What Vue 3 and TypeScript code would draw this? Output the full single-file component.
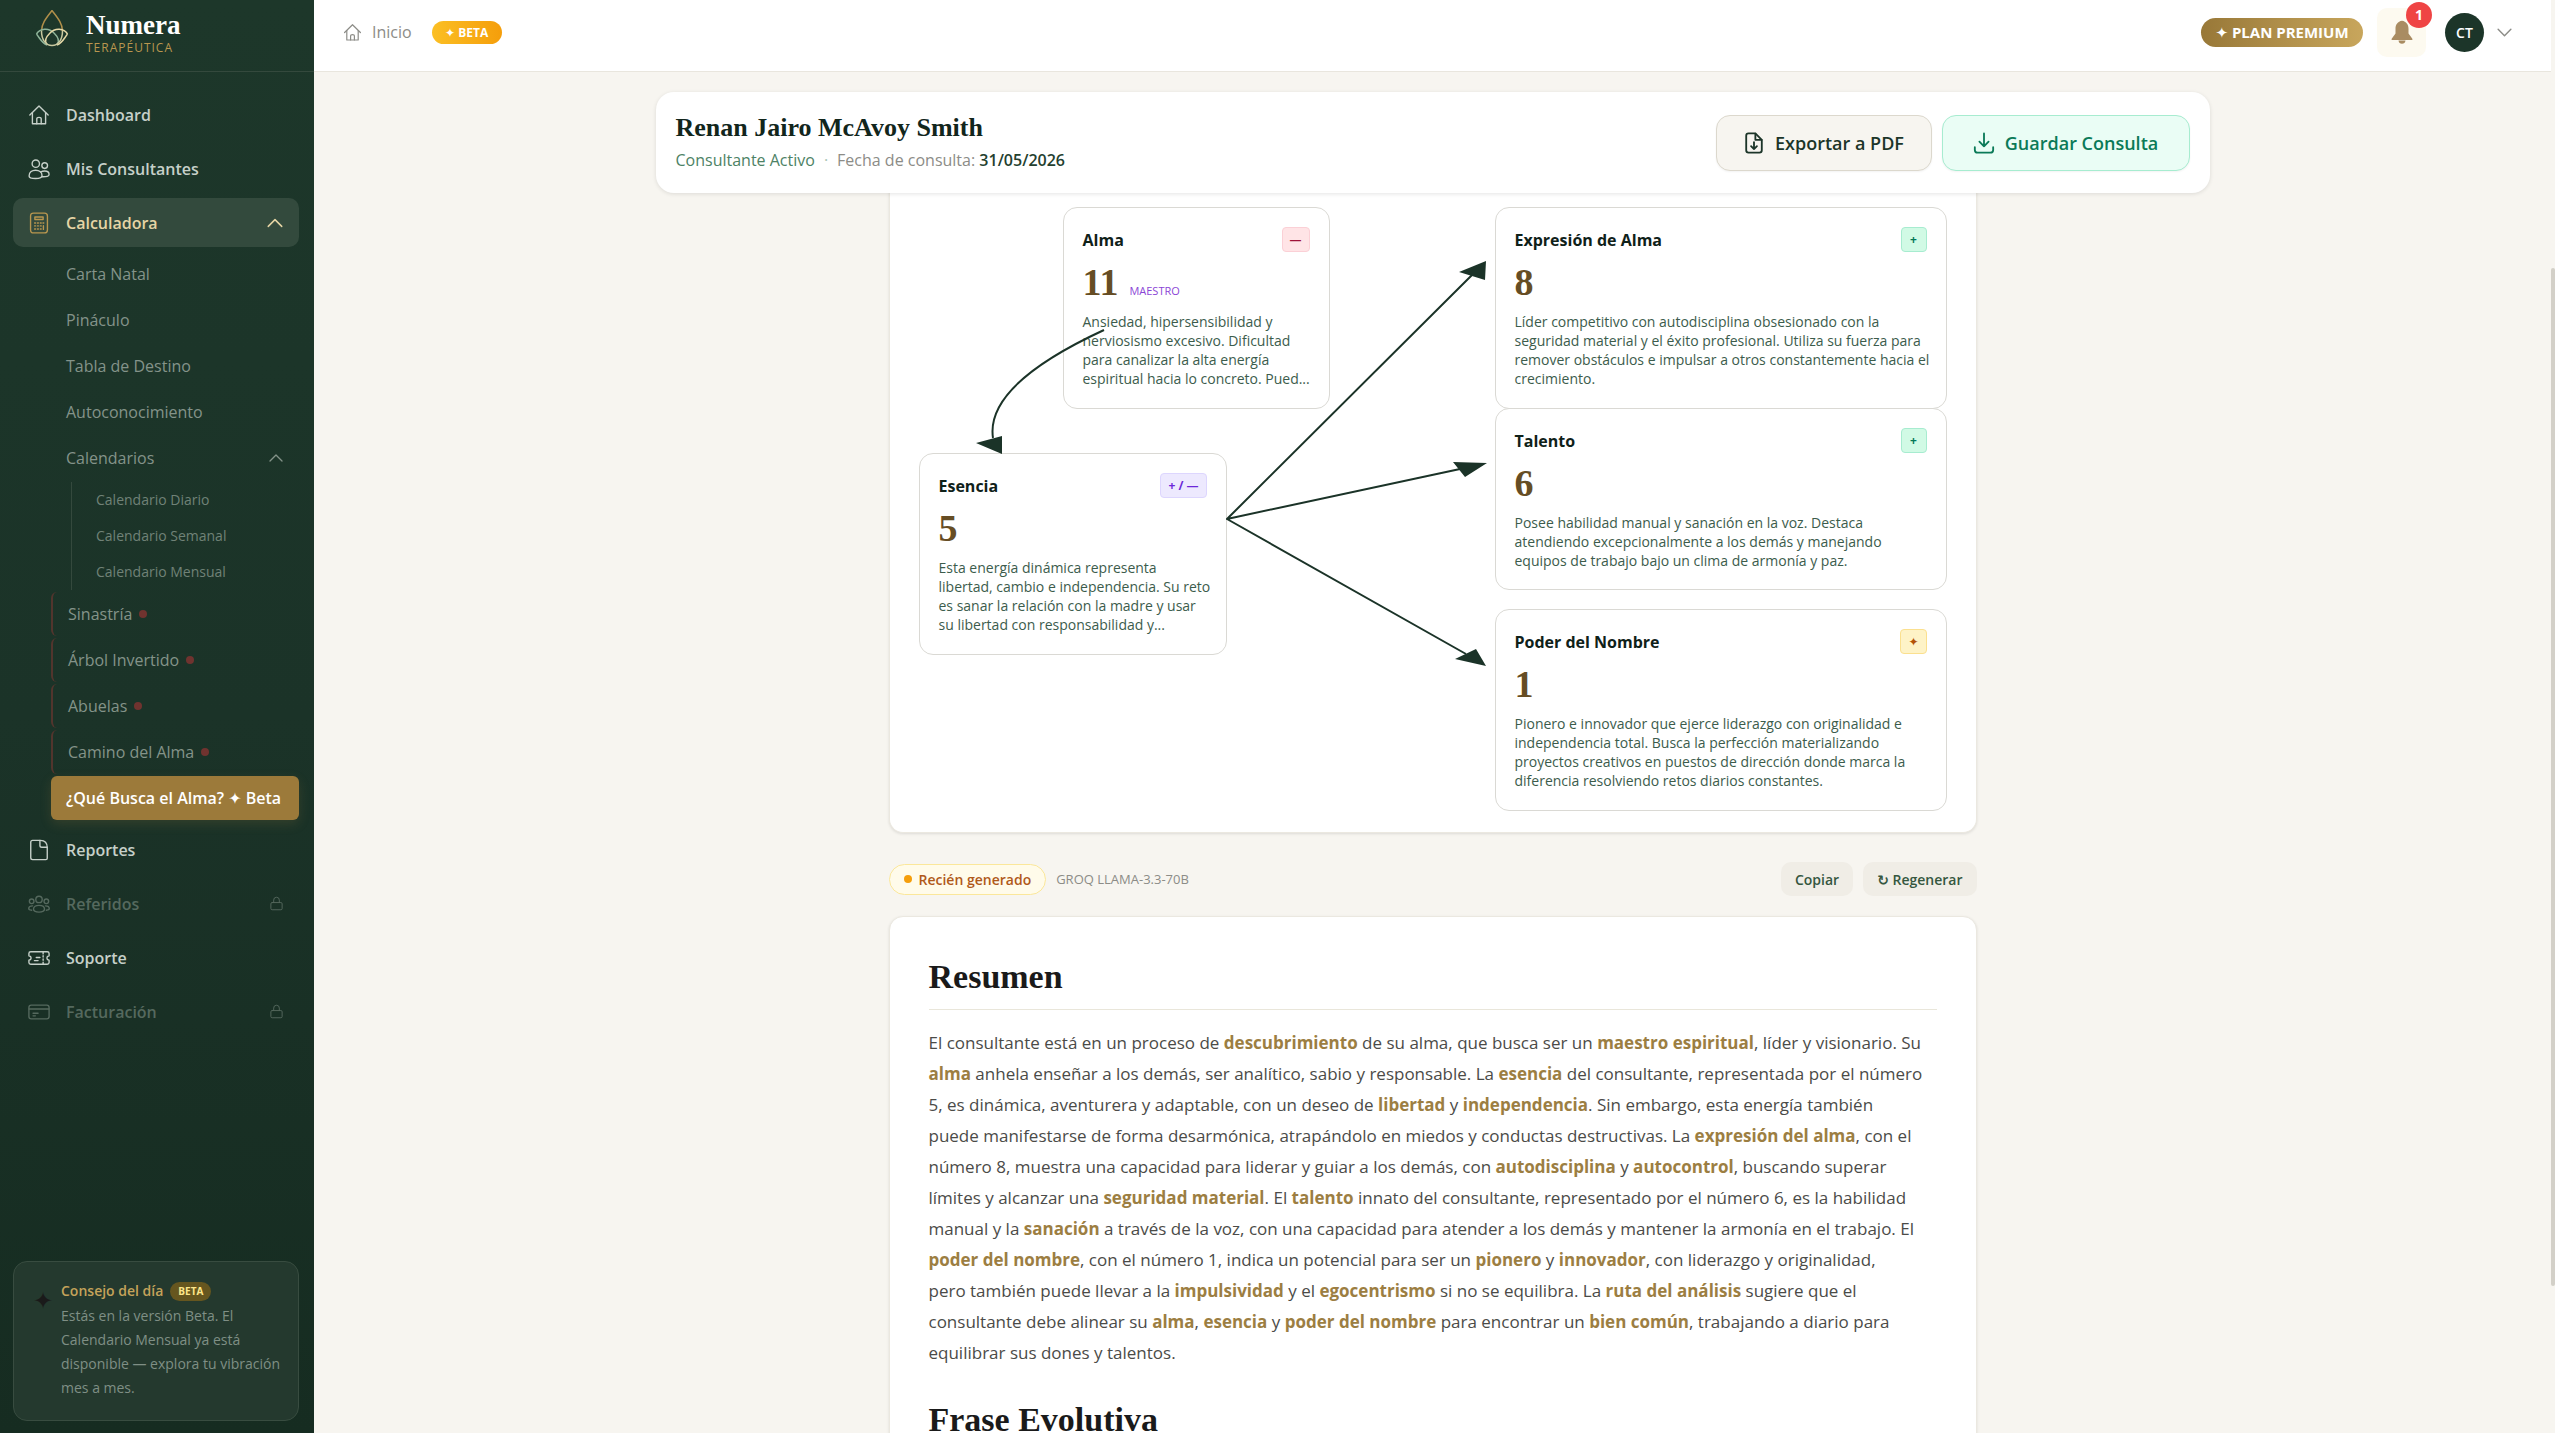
<script setup lang="ts">
type IconName = 'home' | 'users' | 'calc' | 'doc' | 'group' | 'ticket' | 'card' | 'lock' | 'up' | 'down' | 'pdf' | 'save'

const icons: Record<IconName, string[]> = {
  home: ['M2 12 12 2.2 22 12', 'M4.8 9.5V21.5H19.2V9.5', 'M9.6 21.5V16.2Q9.6 14.6 12 14.6T14.4 16.2V21.5'],
  users: [
    'M8.5 2.2a4 4 0 1 1 0 8 4 4 0 0 1 0-8Z',
    'M18.2 5.2a3 3 0 1 1 0 6.200 3 3 0 0 1 0-6.200Z',
    'M1.200 19.500C1.200 15.500 4.500 13.300 8.300 13.300S15.300 15.500 15.300 19C15.300 21.500 12 22.300 8.300 22.300S1.200 21.800 1.200 19.500Z',
    'M14 15.200C15.200 14.500 16.600 14.200 18.200 14.200 21 14.200 23 15.800 23 18 23 19.800 20.500 20.600 15.200 20.400',
  ],
  calc: [
    'M6 1.200H18Q21.200 1.200 21.200 4.400V19.600Q21.200 22.800 18 22.800H6Q2.800 22.800 2.800 19.600V4.400Q2.800 1.200 6 1.200Z',
    'M7.500 5.500H16.500V8.200H7.500Z',
    'M7.200 12H8.200M10.300 12H11.300M13.400 12H14.400M16.300 12H17.200M7.200 15.200H8.200M10.300 15.200H11.300M13.400 15.200H14.400M7.200 18.600H8.200M10.300 18.600H11.300M13.400 18.600H14.400M16.800 15V19',
  ],
  doc: ['M5 1.500H13.500Q21 1.500 21 9.500V21Q21 22.500 19.500 22.500H5Q3 22.500 3 20.500V3.500Q3 1.500 5 1.500Z', 'M13 1.700V7Q13 9 15 9H21'],
  group: [
    'M12 3.500a3.500 3.500 0 1 1 0 7 3.500 3.500 0 0 1 0-7Z',
    'M4 6.600a2.500 2.500 0 1 1 0 5 2.500 2.500 0 0 1 0-5ZM20 6.600a2.500 2.500 0 1 1 0 5 2.500 2.500 0 0 1 0-5Z',
    'M6 17.500C6 14.800 8.500 13.500 12 13.500S18 14.800 18 17.500 15.500 20.800 12 20.800 6 20.300 6 17.500Z',
    'M5 14C2.500 14 .8 15 .8 17 .8 18 2 18.700 4 18.800M19 14C21.500 14 23.200 15 23.200 17 23.200 18 22 18.700 20 18.800',
  ],
  ticket: [
    'M3 5.200H21Q23 5.200 23 7V9.500Q20.600 10 20.600 12T23 14.500V17Q23 18.800 21 18.800H3Q1 18.800 1 17V14.500Q3.400 14 3.400 12T1 9.500V7Q1 5.200 3 5.200Z',
    'M16.500 5.500V7.500M16.500 9.500V11M16.500 13V14.500M16.500 16.500V18.500',
    'M9 11.500H13M7 14.800H11',
  ],
  card: ['M3.500 4.500H20.500Q23 4.500 23 7V17Q23 19.500 20.500 19.500H3.500Q1 19.500 1 17V7Q1 4.500 3.500 4.500Z', 'M1.200 8.700H22.800', 'M5.500 13.300H11M5.500 16.200H8'],
  lock: ['M5 10.500H19Q21 10.500 21 12.500V20Q21 22 19 22H5Q3 22 3 20V12.500Q3 10.500 5 10.500Z', 'M7.500 10.200V6.500a4.500 4.500 0 0 1 9 0V10.200'],
  up: ['M3 16.500 12 7.500 21 16.500'],
  down: ['M3 7.500 12 16.500 21 7.500'],
  pdf: ['M6 1.500H13.500L20.500 8.500V20Q20.500 22.500 18 22.500H6Q3.500 22.500 3.500 20V4Q3.500 1.500 6 1.500Z', 'M13.500 1.700V8.500H20.300', 'M12 11V18.500M8.800 15.500 12 18.700 15.200 15.500'],
  save: ['M12 1.500V15.500M7 10.500 12 15.700 17 10.500', 'M2 16.500V19.500Q2 22.500 5 22.500H19Q22 22.500 22 19.500V16.500'],
}

interface NavItem { label: string; icon: IconName; locked?: boolean }

const mainNav: NavItem[] = [
  { label: 'Dashboard', icon: 'home' },
  { label: 'Mis Consultantes', icon: 'users' },
]
const tools = ['Carta Natal', 'Pináculo', 'Tabla de Destino', 'Autoconocimiento']
const calendars = ['Calendario Diario', 'Calendario Semanal', 'Calendario Mensual']
const restricted = ['Sinastría', 'Árbol Invertido', 'Abuelas', 'Camino del Alma']
const lowerNav: NavItem[] = [
  { label: 'Reportes', icon: 'doc' },
  { label: 'Referidos', icon: 'group', locked: true },
  { label: 'Soporte', icon: 'ticket' },
  { label: 'Facturación', icon: 'card', locked: true },
]

interface DiagramNode {
  title: string; value: string; tag?: string; badge: string; tone: string
  lines: string[]; x: number; y: number; w: number; h: number
}

const nodes: DiagramNode[] = [
  {
    title: 'Alma', value: '11', tag: 'MAESTRO', badge: '—', tone: 'rose', x: 173, y: 30, w: 267, h: 202,
    lines: ['Ansiedad, hipersensibilidad y', 'nerviosismo excesivo. Dificultad', 'para canalizar la alta energía', 'espiritual hacia lo concreto. Pued...'],
  },
  {
    title: 'Esencia', value: '5', badge: '+ / —', tone: 'violet', x: 29, y: 276, w: 308, h: 202,
    lines: ['Esta energía dinámica representa', 'libertad, cambio e independencia. Su reto', 'es sanar la relación con la madre y usar', 'su libertad con responsabilidad y...'],
  },
  {
    title: 'Expresión de Alma', value: '8', badge: '+', tone: 'green', x: 605, y: 30, w: 452, h: 202,
    lines: ['Líder competitivo con autodisciplina obsesionado con la', 'seguridad material y el éxito profesional. Utiliza su fuerza para', 'remover obstáculos e impulsar a otros constantemente hacia el', 'crecimiento.'],
  },
  {
    title: 'Talento', value: '6', badge: '+', tone: 'green', x: 605, y: 231, w: 452, h: 182,
    lines: ['Posee habilidad manual y sanación en la voz. Destaca', 'atendiendo excepcionalmente a los demás y manejando', 'equipos de trabajo bajo un clima de armonía y paz.'],
  },
  {
    title: 'Poder del Nombre', value: '1', badge: '✦', tone: 'amber', x: 605, y: 432, w: 452, h: 202,
    lines: ['Pionero e innovador que ejerce liderazgo con originalidad e', 'independencia total. Busca la perfección materializando', 'proyectos creativos en puestos de dirección donde marca la', 'diferencia resolviendo retos diarios constantes.'],
  },
]

/* Words between asterisks are highlighted in the rendered summary. */
const summary = [
  'El consultante está en un proceso de *descubrimiento* de su alma, que busca ser un *maestro espiritual*, líder y visionario. Su',
  '*alma* anhela enseñar a los demás, ser analítico, sabio y responsable. La *esencia* del consultante, representada por el número',
  '5, es dinámica, aventurera y adaptable, con un deseo de *libertad* y *independencia*. Sin embargo, esta energía también',
  'puede manifestarse de forma desarmónica, atrapándolo en miedos y conductas destructivas. La *expresión del alma*, con el',
  'número 8, muestra una capacidad para liderar y guiar a los demás, con *autodisciplina* y *autocontrol*, buscando superar',
  'límites y alcanzar una *seguridad material*. El *talento* innato del consultante, representado por el número 6, es la habilidad',
  'manual y la *sanación* a través de la voz, con una capacidad para atender a los demás y mantener la armonía en el trabajo. El',
  '*poder del nombre*, con el número 1, indica un potencial para ser un *pionero* y *innovador*, con liderazgo y originalidad,',
  'pero también puede llevar a la *impulsividad* y el *egocentrismo* si no se equilibra. La *ruta del análisis* sugiere que el',
  'consultante debe alinear su *alma*, *esencia* y *poder del nombre* para encontrar un *bien común*, trabajando a diario para',
  'equilibrar sus dones y talentos.',
].map((line) => line.split('*'))
</script>

<template>
  <div class="app">
    <aside class="sidebar">
      <div class="brand">
        <svg class="logo" viewBox="0 0 34 38" fill="none" stroke-width="1.500">
          <path d="M17 1.500C12 8 6.500 14 6.500 22M17 1.500C22 8 27.500 14 27.500 22" stroke="#b08f4a" />
          <path d="M1.500 25C5 19 14 18.500 19 24 23 28 25 32 22 35M1.500 25C6 31 7 34 12 36" stroke="#8fb59a" />
          <path d="M32.500 25C29 19 20 18.500 15 24 11 28 9 32 12 35M32.500 25C28 31 27 34 22 36" stroke="#e5d9a8" />
          <path d="M6.500 22C6.500 31 11 36.500 17 36.500S27.500 31 27.500 22" stroke="#c9c9a0" />
        </svg>
        <div>
          <div class="brand-name">Numera</div>
          <div class="brand-sub">TERAPÉUTICA</div>
        </div>
      </div>

      <nav class="nav">
        <a v-for="item in mainNav" :key="item.label" class="item" href="#">
          <svg class="icon" viewBox="0 0 24 24"><path v-for="d in icons[item.icon]" :key="d" :d="d" /></svg>
          <span>{{ item.label }}</span>
        </a>
        <button class="item open" type="button">
          <svg class="icon gold" viewBox="0 0 24 24"><path v-for="d in icons.calc" :key="d" :d="d" /></svg>
          <span>Calculadora</span>
          <svg class="chev" viewBox="0 0 24 24"><path :d="icons.up[0]" /></svg>
        </button>

        <div class="sub">
          <a v-for="t in tools" :key="t" class="sub-item" href="#">{{ t }}</a>
          <button class="sub-item" type="button">
            <span>Calendarios</span>
            <svg class="chev small" viewBox="0 0 24 24"><path :d="icons.up[0]" /></svg>
          </button>
          <div class="calendars">
            <a v-for="c in calendars" :key="c" href="#">{{ c }}</a>
          </div>
          <a v-for="r in restricted" :key="r" class="sub-item restricted" href="#">{{ r }}<i class="dot" /></a>
          <a class="sub-item current" href="#">¿Qué Busca el Alma? ✦ Beta</a>
        </div>

        <a v-for="item in lowerNav" :key="item.label" class="item" :class="{ locked: item.locked }" href="#">
          <svg class="icon" viewBox="0 0 24 24"><path v-for="d in icons[item.icon]" :key="d" :d="d" /></svg>
          <span>{{ item.label }}</span>
          <svg v-if="item.locked" class="lock" viewBox="0 0 24 24"><path v-for="d in icons.lock" :key="d" :d="d" /></svg>
        </a>
      </nav>

      <section class="tip">
        <span class="tip-star">✦</span>
        <div>
          <div class="tip-head">Consejo del día <span class="tip-beta">BETA</span></div>
          <p>Estás en la versión Beta. El<br>Calendario Mensual ya está<br>disponible — explora tu vibración<br>mes a mes.</p>
        </div>
      </section>
    </aside>

    <div class="content">
      <header class="topbar">
        <a class="crumb" href="#">
          <svg class="crumb-icon" viewBox="0 0 24 24"><path v-for="d in icons.home" :key="d" :d="d" /></svg>
          Inicio
        </a>
        <span class="beta">✦ BETA</span>
        <span class="plan">✦ PLAN PREMIUM</span>
        <button class="bell" type="button" aria-label="Notificaciones">
          <svg viewBox="0 0 24 24">
            <path d="M12 .8C7.800 1.500 5.500 4.500 5.500 9V13.500L1.500 19Q1.200 20 2.300 20H21.700Q22.800 20 22.500 19L18.500 13.500V9C18.500 4.500 16.200 1.500 12 .8ZM8.500 20.500Q9 23.800 12 23.800T15.500 20.500Z" />
          </svg>
          <span class="count">1</span>
        </button>
        <button class="account" type="button">
          <span class="avatar">CT</span>
          <svg class="account-chev" viewBox="0 0 24 24"><path :d="icons.down[0]" /></svg>
        </button>
      </header>

      <main class="main">
        <section class="client">
          <div>
            <h1>Renan Jairo McAvoy Smith</h1>
            <div class="meta">
              <span class="active">Consultante Activo</span>
              <span class="sep">·</span>
              <span>Fecha de consulta: <b>31/05/2026</b></span>
            </div>
          </div>
          <div class="actions">
            <button class="btn" type="button">
              <svg viewBox="0 0 24 24"><path v-for="d in icons.pdf" :key="d" :d="d" /></svg>
              Exportar a PDF
            </button>
            <button class="btn save" type="button">
              <svg viewBox="0 0 24 24"><path v-for="d in icons.save" :key="d" :d="d" /></svg>
              Guardar Consulta
            </button>
          </div>
        </section>

        <section class="diagram">
          <article
            v-for="n in nodes" :key="n.title" class="node"
            :style="{ left: n.x + 'px', top: n.y + 'px', width: n.w + 'px', height: n.h + 'px' }"
          >
            <div class="node-head">
              <h3>{{ n.title }}</h3>
              <span class="badge" :class="n.tone">{{ n.badge }}</span>
            </div>
            <div class="node-value">{{ n.value }}<small v-if="n.tag">{{ n.tag }}</small></div>
            <p><template v-for="(l, i) in n.lines" :key="l"><br v-if="i">{{ l }}</template></p>
          </article>
          <svg class="links" viewBox="0 0 1086 654" width="1086" height="654">
            <path d="M214 153Q95 208 103 261M582 98 337 342 570 292M337 342 576 477" fill="none" stroke="#1b3328" stroke-width="2" stroke-linejoin="round" />
            <path d="M86 266 112 259V277ZM569 95 596 84 595 103ZM563 285 597 286 575 300ZM565 482 586 472 596 489Z" fill="#1b3328" />
          </svg>
        </section>

        <div class="status">
          <span class="fresh"><i />Recién generado</span>
          <span class="model">GROQ LLAMA-3.3-70B</span>
          <button class="mini first" type="button">Copiar</button>
          <button class="mini" type="button">↻ Regenerar</button>
        </div>

        <article class="result">
          <h2>Resumen</h2>
          <p><template v-for="(parts, i) in summary" :key="i"><br v-if="i"><template v-for="(part, j) in parts" :key="j"><strong v-if="j % 2">{{ part }}</strong><template v-else>{{ part }}</template></template></template></p>
          <h2>Frase Evolutiva</h2>
        </article>
      </main>
    </div>
    <div class="scroll"><i /></div>
  </div>
</template>

<style>
body {
  margin: 0;
  overflow: hidden;
}
</style>

<style scoped>
* {
  box-sizing: border-box;
}
.app {
  display: flex;
  height: 100vh;
  overflow: hidden;
  background: #f7f5f0;
  color: #1a1a1a;
  font-family: "Open Sans", "Noto Sans", "DejaVu Sans", sans-serif;
  font-size: 16px;
}
a {
  color: inherit;
  text-decoration: none;
}
button {
  border: 0;
  background: none;
  color: inherit;
  font: inherit;
  padding: 0;
  text-align: left;
}
svg {
  display: block;
  flex: none;
}
.icon, .chev, .lock, .crumb-icon, .account-chev, .btn svg {
  fill: none;
  stroke: currentColor;
  stroke-width: 1.5;
  stroke-linecap: round;
  stroke-linejoin: round;
}

/* Sidebar */
.sidebar {
  display: flex;
  flex-direction: column;
  flex: none;
  width: 314px;
  background: linear-gradient(#1d372a, #1b3328 50%, #162c21);
  color: #c6d0c9;
}
.brand {
  display: flex;
  gap: 17px;
  height: 72px;
  padding: 9px 35px 0;
  border-bottom: 1px solid #34493d;
}
.logo {
  width: 34px;
  height: 38px;
}
.brand-name {
  color: #fff;
  font: bold 27px/32px "Liberation Serif", serif;
}
.brand-sub {
  color: #b9964f;
  font-size: 12px;
  line-height: 14px;
  letter-spacing: 1px;
}
.nav {
  display: flex;
  flex-direction: column;
  gap: 5px;
  padding: 18px 15px 0 13px;
}
.item {
  display: flex;
  align-items: center;
  gap: 16px;
  height: 49px;
  padding: 0 15px;
  border-radius: 10px;
  font-weight: 600;
}
.icon {
  width: 22px;
  height: 22px;
}
.gold {
  color: #b9964f;
}
.open {
  background: #334a3d;
  color: #e6d5a5;
}
.chev {
  width: 18px;
  height: 18px;
  margin-left: auto;
  stroke-width: 2;
}
.chev.small {
  width: 16px;
  height: 16px;
}
.lock {
  width: 15px;
  height: 15px;
  margin-left: auto;
}
.locked {
  color: #55695e;
}
.sub {
  display: flex;
  flex-direction: column;
  gap: 2px;
  margin-left: 38px;
  color: #849389;
}
.sub-item {
  display: flex;
  align-items: center;
  height: 44px;
  padding: 0 15px;
  border-radius: 6px;
}
.calendars {
  display: flex;
  flex-direction: column;
  margin-left: 20px;
  padding-left: 24px;
  border-left: 1px solid #34493d;
  color: #708277;
  font-size: 14px;
}
.calendars a {
  height: 36px;
  line-height: 35px;
}
.restricted {
  border-left: 2px solid #52352d;
}
.dot {
  width: 8px;
  height: 8px;
  margin-left: 7px;
  border-radius: 4px;
  background: #70332f;
}
.current {
  background: #9c7a3a;
  color: #fff;
  font-weight: 600;
  white-space: nowrap;
  box-shadow: 0 4px 12px #9c7a3a33;
}
.tip {
  display: flex;
  gap: 9px;
  height: 160px;
  margin: auto 15px 12px 13px;
  padding: 17px 16px;
  border: 1px solid #384c40;
  border-radius: 14px;
  background: #24392e;
}
.tip-star {
  width: 22px;
  padding-left: 3px;
  color: #1a1a1a;
  font-size: 24px;
  line-height: 42px;
}
.tip-head {
  display: flex;
  align-items: center;
  gap: 7px;
  color: #c4a35a;
  font-size: 14px;
  line-height: 24px;
  font-weight: 600;
  white-space: nowrap;
}
.tip-beta {
  padding: 0 8px;
  border-radius: 10px;
  background: #66561f;
  color: #fde68a;
  font-size: 10px;
  line-height: 19px;
  font-weight: 700;
}
.tip p {
  margin: 1px 0 0;
  color: #7f8f85;
  font-size: 14px;
  line-height: 24px;
  white-space: nowrap;
}

/* Top bar */
.content {
  display: flex;
  flex: 1;
  flex-direction: column;
  min-width: 0;
}
.topbar {
  display: flex;
  flex: none;
  align-items: center;
  height: 72px;
  padding: 0 38px 7px 29px;
  border-bottom: 1px solid #e9e6de;
  background: #fff;
}
.crumb {
  display: flex;
  align-items: center;
  gap: 10px;
  color: #8c8c87;
}
.crumb-icon {
  width: 19px;
  height: 19px;
}
.beta, .plan {
  border-radius: 15px;
  color: #fff;
  font-weight: 700;
  text-align: center;
  white-space: nowrap;
}
.beta {
  width: 70px;
  margin-left: 20px;
  background: linear-gradient(90deg, #fbbf24, #f59e0b);
  font-size: 12px;
  line-height: 23px;
}
.plan {
  width: 162px;
  margin: 0 14px 0 auto;
  background: linear-gradient(90deg, #987838, #c8a65c);
  font-size: 15px;
  line-height: 29px;
}
.bell {
  position: relative;
  display: grid;
  place-items: center;
  width: 49px;
  height: 49px;
  border-radius: 10px;
  background: #fdfaf0;
}
.bell svg {
  width: 24px;
  height: 24px;
  fill: #a98c62;
}
.count {
  position: absolute;
  top: -6px;
  right: -6px;
  width: 26px;
  border-radius: 13px;
  background: #ef4444;
  color: #fff;
  font-size: 14px;
  font-weight: 700;
  line-height: 26px;
  text-align: center;
}
.account {
  display: flex;
  align-items: center;
  gap: 12px;
  margin-left: 19px;
}
.avatar {
  width: 39px;
  border-radius: 20px;
  background: #1c3529;
  color: #fff;
  font-size: 14px;
  font-weight: 600;
  line-height: 39px;
  text-align: center;
}
.account-chev {
  width: 17px;
  height: 17px;
  color: #8c8c87;
  stroke-width: 2;
}

/* Main column */
.main {
  display: flex;
  flex: 1;
  flex-direction: column;
  align-items: center;
  min-height: 0;
  padding: 20px 24px 0;
}
.client {
  position: relative;
  z-index: 2;
  display: flex;
  flex: none;
  align-items: center;
  justify-content: space-between;
  width: 100%;
  max-width: 1554px;
  height: 101px;
  padding: 0 20px;
  border-radius: 18px;
  background: #fff;
  box-shadow: 0 1px 4px #0000001c;
}
h1, h2, h3, p {
  margin: 0;
}
h1 {
  color: #12261c;
  font: bold 26px/34px "Liberation Serif", serif;
}
.meta {
  display: flex;
  gap: 9px;
  color: #8c8c87;
  line-height: 30px;
}
.active {
  color: #4d8265;
}
.sep {
  color: #a9c4b4;
}
.meta b {
  color: #24402f;
  font-weight: 600;
}
.actions {
  display: flex;
  gap: 10px;
}
.btn {
  display: flex;
  align-items: center;
  justify-content: center;
  gap: 10px;
  width: 216px;
  height: 56px;
  border: 1px solid #dcd8cd;
  border-radius: 14px;
  background: #f7f5f0;
  color: #1c3529;
  font-size: 18px;
  font-weight: 600;
  white-space: nowrap;
  box-shadow: 0 1px 2px #0000000d;
}
.btn svg {
  width: 22px;
  height: 22px;
  stroke-width: 2;
}
.btn.save {
  width: 248px;
  border-color: #a7ecd0;
  background: #eafdf5;
  color: #0b7a58;
}
.diagram {
  position: relative;
  flex: none;
  width: 100%;
  max-width: 1088px;
  height: 656px;
  margin-top: -16px;
  border: 1px solid #ebe8e0;
  border-top: 0;
  border-radius: 0 0 14px 14px;
  background: #fff;
  box-shadow: 0 1px 3px #0000001c;
}
.links {
  position: absolute;
  top: 0;
  left: 0;
}
.node {
  position: absolute;
  padding: 19px;
  border: 1px solid #dad9d4;
  border-radius: 14px;
  background: #fff;
}
.node-head {
  display: flex;
  align-items: center;
  justify-content: space-between;
  height: 25px;
}
h3 {
  color: #0f2119;
  font-size: 16px;
  font-weight: 700;
}
.badge {
  min-width: 26px;
  padding: 0 7px;
  border: 1px solid;
  border-radius: 4px;
  font-size: 12px;
  font-weight: 700;
  line-height: 23px;
  text-align: center;
}
.rose {
  border-color: #fbd0d6;
  background: #ffe4e6;
  color: #9f1239;
}
.violet {
  border-color: #ddd6fe;
  background: #ede9fe;
  color: #6d28d9;
}
.green {
  border-color: #a7ecd0;
  background: #d1fae5;
  color: #047857;
}
.amber {
  border-color: #fbe08f;
  background: #fef3c7;
  color: #b45309;
}
.node-value {
  display: flex;
  align-items: baseline;
  gap: 11px;
  height: 60px;
  color: #664d24;
  font: bold 38px/60px "Liberation Serif", serif;
}
.node-value small {
  color: #8b46d6;
  font: 500 11px "Open Sans", sans-serif;
}
.node p {
  color: #3c5c4c;
  font-size: 14px;
  line-height: 19px;
  white-space: nowrap;
}
.status {
  display: flex;
  flex: none;
  align-items: center;
  gap: 10px;
  width: 100%;
  max-width: 1088px;
  margin: 29px 0 20px;
}
.fresh {
  display: flex;
  align-items: center;
  gap: 7px;
  height: 31px;
  padding: 0 14px;
  border: 1px solid #fbe79a;
  border-radius: 16px;
  background: #fffbea;
  color: #b0591a;
  font-size: 14px;
  font-weight: 600;
}
.fresh i {
  width: 8px;
  height: 8px;
  border-radius: 4px;
  background: #f59e0b;
}
.model {
  color: #8c8c87;
  font-size: 13px;
}
.mini {
  height: 34px;
  padding: 0 14px;
  border-radius: 10px;
  background: #f0ede6;
  color: #35573f;
  font-size: 14px;
  font-weight: 600;
}
.first {
  margin-left: auto;
}
.result {
  flex: none;
  width: 100%;
  max-width: 1088px;
  padding: 40px 39px;
  border: 1px solid #ebe8e0;
  border-radius: 14px;
  background: #fff;
  box-shadow: 0 1px 3px #0000001c;
}
h2 {
  padding-bottom: 12px;
  border-bottom: 1px solid #e9e6da;
  font: bold 34px/40px "Liberation Serif", serif;
}
.result p {
  margin: 17px 0 32px;
  color: #4b4b48;
  font-size: 17px;
  line-height: 31px;
  white-space: nowrap;
}
.result strong {
  color: #9c7e42;
  font-weight: 700;
}
.scroll {
  flex: none;
  width: 4px;
  padding-top: 268px;
}
.scroll i {
  display: block;
  height: 1018px;
  border-radius: 2px;
  background: #d3d0c8;
}
</style>
